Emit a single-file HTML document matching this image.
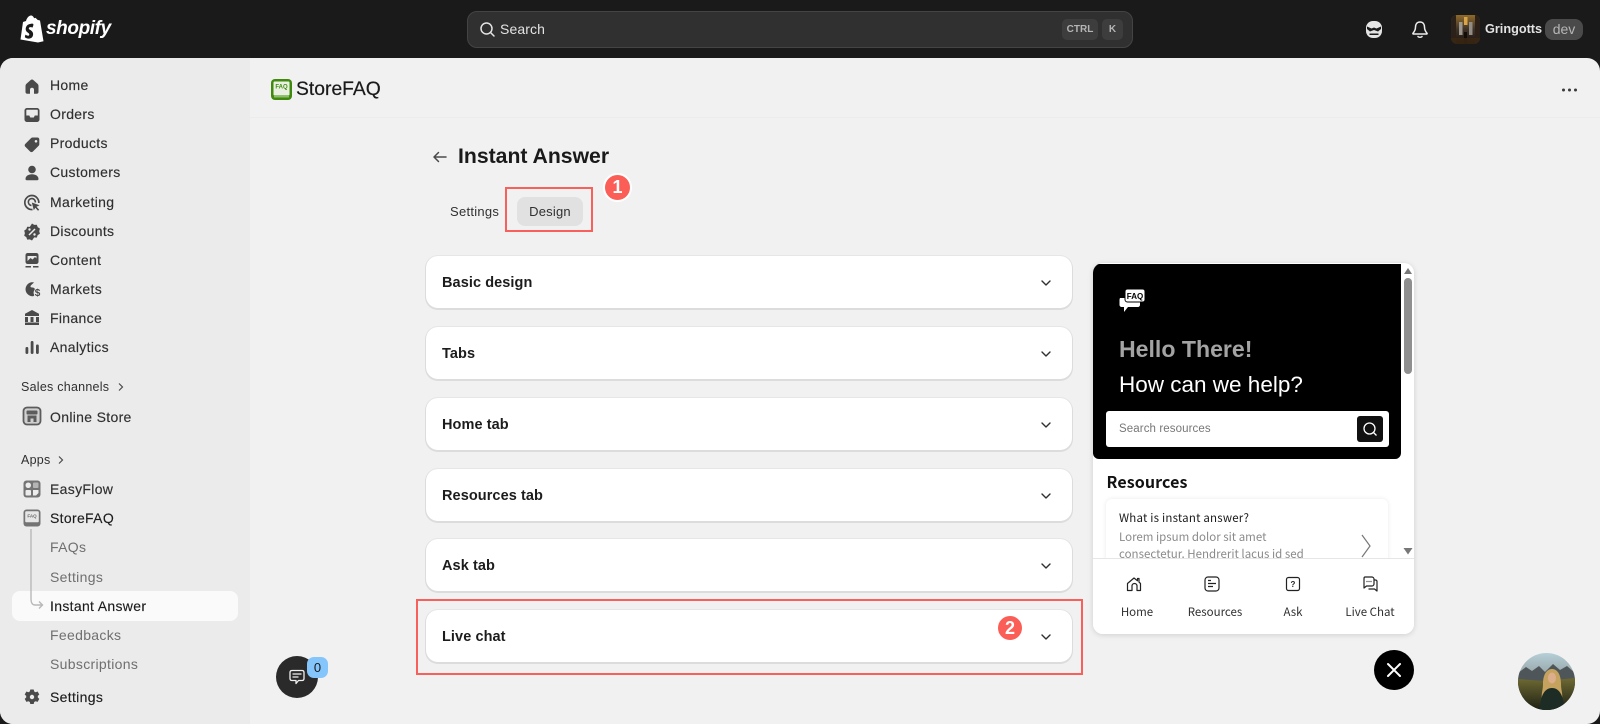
<!DOCTYPE html>
<html><head><meta charset="utf-8"><style>
*{box-sizing:border-box;margin:0;padding:0}
html,body{width:1600px;height:724px;overflow:hidden;background:#1a1a1a;font-family:"Liberation Sans",sans-serif}
.a{position:absolute}
.t{position:absolute;white-space:nowrap;line-height:20px;height:20px}
.n{left:50px;font-size:14px;color:#303030;letter-spacing:.32px;-webkit-text-stroke:.15px #303030}
.s{left:50px;font-size:14px;color:#6f6f6f;letter-spacing:.32px}
.card{position:absolute;left:426px;width:646px;height:52px;background:#fff;border-radius:12px;box-shadow:0 1px 0 1px #dcdcdc,0 0 0 1px #e6e6e6}
.card b{position:absolute;left:16px;top:17px;font-size:14.5px;line-height:20px;color:#1c1c1c;letter-spacing:.08px}
.card svg{position:absolute;left:614px;top:21px}
.ic{position:absolute;left:22px}
.red{position:absolute;border:2px solid #f8605b}
.badge{position:absolute;background:#fb5e57;color:#fff;border-radius:50%;font-weight:bold;text-align:center;border:2px solid #fff}
.lab{position:absolute;top:603px;width:90px;text-align:center;font:11.5px/18px "Noto Sans CJK SC","Liberation Sans",sans-serif;color:#303030}
</style></head><body>
<!-- main -->
<div class="a" style="left:0;top:58px;width:1600px;height:666px;background:#f1f1f1;border-radius:13px;overflow:hidden">
  <div class="a" style="left:0;top:0;width:250px;height:666px;background:#ebebeb"></div>
  <div class="a" style="left:250px;top:59px;width:1350px;height:1px;background:#ececec"></div>
</div>

<!-- top bar -->
<svg class="a" style="left:20px;top:15px" width="24" height="28" viewBox="0 0 24 28"><path d="M20 5.500l-2.400-.6-1.900-1.900c-.2-.2-.5-.1-.6-.1l-1 .3C13.500 1.800 12.600.5 11 .5 8.800.5 6.800 3 6 6L3 7 .5 24.500 18 27.500l5.500-1.300z" fill="#fff"/><path d="M13.500 9.800l-.9 2.700s-1-.5-2.100-.4c-1.700.1-1.700 1.100-1.700 1.400.1 1.500 4.100 1.800 4.300 5.300.2 2.800-1.500 4.700-3.900 4.800-2.800.2-4.400-1.500-4.400-1.500l.6-2.500s1.600 1.200 2.800 1.100c.8 0 1.100-.7 1.100-1.200-.1-2-3.400-1.900-3.600-5.100-.2-2.700 1.600-5.500 5.500-5.700 1.300-.1 1.900.2 1.900.2z" fill="#1a1a1a"/></svg>
<div class="t" style="left:46px;top:19px;font-size:19px;font-weight:bold;font-style:italic;color:#fff;letter-spacing:-.4px">shopify</div>

<div class="a" style="left:467px;top:11px;width:666px;height:37px;background:#303030;border:1px solid #444;border-radius:10px"></div>
<svg class="a" style="left:479px;top:21px" width="17" height="17" viewBox="0 0 17 17" fill="none" stroke="#e3e3e3" stroke-width="1.500"><circle cx="7.500" cy="7.500" r="5.500"/><path d="M11.500 11.500l3.500 3.500" stroke-linecap="round"/></svg>
<div class="t" style="left:500px;top:19px;font-size:14px;color:#e3e3e3;letter-spacing:.1px">Search</div>
<div class="a" style="left:1062px;top:19px;width:36px;height:21px;background:#3d3d3d;border-radius:5px;color:#b5b5b5;font:bold 10px/21px 'Liberation Sans',sans-serif;text-align:center">CTRL</div>
<div class="a" style="left:1102px;top:19px;width:21px;height:21px;background:#3d3d3d;border-radius:5px;color:#b5b5b5;font:bold 10px/21px 'Liberation Sans',sans-serif;text-align:center">K</div>

<svg class="a" style="left:1365px;top:20px" width="18" height="19" viewBox="0 0 18 19"><rect x="1" y="1" width="16" height="17" rx="7" fill="#e4e4e4"/><path d="M2 6.500l4.500 2 2.500-1 2.500 1 4.500-2V9l-3 2.500-4-1.500-4 1.500L2 9zM4.500 13.500h9V15h-9z" fill="#1a1a1a"/></svg>
<svg class="a" style="left:1411px;top:20px" width="18" height="20" viewBox="0 0 18 20" fill="none" stroke="#ececec" stroke-width="1.500"><path d="M9 2c-3.200 0-4.500 2.500-4.500 5 0 3-1 4.500-2.500 6.200-.3.4-.1.8.4.8h13.200c.5 0 .7-.4.4-.8C14.500 11.500 13.500 10 13.500 7c0-2.500-1.300-5-4.500-5z"/><path d="M7 16.500c.4 1 3.600 1 4 0" stroke-linecap="round"/></svg>
<svg class="a" style="left:1451px;top:15px" width="29" height="29" viewBox="0 0 29 29"><defs><clipPath id="av"><rect width="29" height="29" rx="6"/></clipPath><linearGradient id="ag" x1="0" y1="0" x2="0" y2="1"><stop offset="0" stop-color="#8f6a2b"/><stop offset=".5" stop-color="#3d3228"/><stop offset="1" stop-color="#1c130d"/></linearGradient></defs><g clip-path="url(#av)"><rect width="29" height="29" fill="url(#ag)"/><rect x="0" width="5" height="29" fill="#2b2119"/><rect x="24" width="5" height="29" fill="#2b2119"/><rect x="8" y="7" width="3.500" height="13" fill="#9c978e"/><rect x="18" y="7" width="3.500" height="13" fill="#918d85"/><rect x="13" y="2" width="3.500" height="8" fill="#d8a548"/><rect x="13" y="17" width="3" height="12" fill="#120c08"/><rect y="23" width="29" height="6" fill="#3c2814" opacity=".8"/></g></svg>
<div class="t" style="left:1485px;top:19px;font-size:12.7px;font-weight:bold;color:#e3e3e3">Gringotts</div>
<div class="a" style="left:1545px;top:19px;width:38px;height:21px;background:#4a4a4a;border-radius:8px;color:#b5b5b5;font:14px/21px 'Liberation Sans',sans-serif;text-align:center">dev</div>

<!-- sidebar icons -->
<svg class="ic" style="top:77px" width="20" height="18" viewBox="0 0 20 18"><path d="M10 2.500c-.5 0-.9.200-1.300.5L4.500 6.800C4 7.300 3.500 8 3.500 9v6c0 1 .7 1.700 1.700 1.700h2.800v-4.200c0-1 .9-1.800 2-1.800s2 .8 2 1.800v4.200h2.800c1 0 1.700-.7 1.700-1.700V9c0-1-.5-1.700-1-2.200L11.300 3c-.4-.3-.8-.5-1.300-.5z" fill="#4a4a4a"/></svg>
<svg class="ic" style="top:106px" width="20" height="18" viewBox="0 0 20 18"><path d="M5 2h10c1.300 0 2.500 1.100 2.500 2.500v9c0 1.400-1.200 2.500-2.500 2.500H5c-1.300 0-2.500-1.100-2.500-2.500v-9C2.500 3.100 3.700 2 5 2zm-.7 7.500h3l1 2h3.500l1-2h3V4.500c0-.5-.3-.8-.8-.8H5.100c-.5 0-.8.3-.8.8z" fill="#4a4a4a"/></svg>
<svg class="ic" style="top:135px" width="20" height="18" viewBox="0 0 20 18"><path d="M10.500 2.500h5c1 0 1.800.8 1.800 1.800v5c0 .5-.2 1-.5 1.300l-6 6c-.7.700-1.900.7-2.600 0l-5-5c-.7-.7-.7-1.900 0-2.600l6-6c.3-.3.8-.5 1.300-.5zM14 5a1.300 1.300 0 100 2.600A1.300 1.300 0 0014 5z" fill="#4a4a4a"/></svg>
<svg class="ic" style="top:164px" width="20" height="18" viewBox="0 0 20 18" fill="#4a4a4a"><circle cx="10" cy="5.500" r="3.800"/><path d="M3.500 15c0-3 2.900-4.800 6.500-4.800s6.500 1.800 6.500 4.800c0 .8-.5 1.200-1.200 1.200H4.700c-.7 0-1.200-.4-1.200-1.200z"/></svg>
<svg class="ic" style="top:193px" width="20" height="20" viewBox="0 0 20 20" fill="none" stroke="#4a4a4a"><path d="M10.500 16.500A7 7 0 1 1 16.800 10" stroke-width="1.700"/><path d="M9.500 12.500a3.500 3.500 0 1 1 3.800-3" stroke-width="1.600"/><path d="M9.800 9.500l7.700 2.700-3 1.500 2.700 3-1.200 1-2.700-3-1.500 2.500z" fill="#4a4a4a" stroke="none"/></svg>
<svg class="ic" style="top:222px" width="20" height="20" viewBox="0 0 20 20"><path d="M10 1.500l2.200 1.400 2.600-.2.900 2.400 2.200 1.500-.7 2.500.7 2.600-2.200 1.400-.9 2.500-2.600-.2L10 18.500l-2.200-1.100-2.600.2-.9-2.500-2.100-1.400.7-2.600-.7-2.500 2.100-1.500.9-2.400 2.600.2z" fill="#4a4a4a"/><path d="M7 13l6-6" stroke="#ebebeb" stroke-width="1.500"/><circle cx="7.500" cy="7.500" r="1.200" fill="#ebebeb"/><circle cx="12.500" cy="12.500" r="1.200" fill="#ebebeb"/></svg>
<svg class="ic" style="top:250px" width="20" height="20" viewBox="0 0 20 20"><rect x="3.500" y="3" width="13" height="11" rx="2.200" fill="#4a4a4a"/><path d="M5.500 11l3-3 2 1.500L13 7l1.500 1.500V6H5.500z" fill="#ebebeb"/><path d="M3.500 16h5.500v1.500H3.500zM11 16h5.500v1.500H11z" fill="#4a4a4a"/></svg>
<svg class="ic" style="top:279px" width="20" height="20" viewBox="0 0 20 20"><path d="M12.500 3.500A7 7 0 1 0 11 17.200c1-.1 1.500-.7 1-1.700-.7-1.500-.5-3 .5-4.500s-.7-2.500-2.500-2.500-2-1.500-.7-2.500l2.700-2.500z" fill="#4a4a4a"/><text x="12.700" y="17" font-family="Liberation Sans,sans-serif" font-size="10" font-weight="bold" fill="#4a4a4a">$</text></svg>
<svg class="ic" style="top:308px" width="20" height="20" viewBox="0 0 20 20" fill="#4a4a4a"><path d="M10 2l7 3.800V8H3V5.800z"/><path d="M3 9h3v5H3zM8.500 9h3v5h-3zM14 9h3v5h-3zM3 14.500h14V17H3z"/></svg>
<svg class="ic" style="top:337px" width="20" height="20" viewBox="0 0 20 20" fill="#4a4a4a"><rect x="3.500" y="10" width="2.800" height="7" rx="1.200"/><rect x="8.700" y="4" width="2.800" height="13" rx="1.200"/><rect x="14" y="7.500" width="2.800" height="9.500" rx="1.200"/></svg>
<svg class="ic" style="top:406px" width="20" height="20" viewBox="0 0 20 20"><rect x="1.500" y="1.500" width="17" height="17" rx="3.500" fill="#cfcfcf" stroke="#5c5c5c" stroke-width="1.800"/><rect x="4.500" y="4.500" width="11" height="4" rx="1" fill="#5c5c5c"/><path d="M5.500 9.500h9V16h-3v-3.500h-3V16h-3z" fill="#5c5c5c"/></svg>
<svg class="ic" style="top:479px" width="20" height="20" viewBox="0 0 20 20"><rect x="1.500" y="1.500" width="17" height="17" rx="3" fill="#747474"/><rect x="3.500" y="3.500" width="5.500" height="5.500" rx="2.700" fill="#ececec"/><rect x="11" y="3.500" width="5.500" height="5.500" rx="1" fill="#b5b5b5"/><rect x="3.500" y="11" width="5.500" height="5.500" rx="1" fill="#ececec"/><path d="M11 11h5.500v3l-2.500 2.500H11z" fill="#ececec"/></svg>
<svg class="ic" style="top:508px" width="20" height="20" viewBox="0 0 20 20"><rect x="1.500" y="1.500" width="17" height="17" rx="3" fill="#747474"/><rect x="3.200" y="3.200" width="13.600" height="11" rx="1" fill="#e6e6e6"/><text x="10" y="9.500" text-anchor="middle" font-family="Liberation Sans,sans-serif" font-size="4.500" font-weight="bold" fill="#666">FAQ</text></svg>
<svg class="ic" style="top:687px" width="20" height="20" viewBox="0 0 20 20"><path d="M8.300 2.500h3.400l.5 2 1.400.7 2-.7 1.700 3-1.500 1.400v1.600l1.500 1.400-1.700 3-2-.7-1.400.8-.5 2H8.300l-.5-2-1.400-.8-2 .7-1.700-3 1.500-1.400V8.900L2.700 7.500l1.700-3 2 .7 1.400-.7zM10 7.800a2.200 2.200 0 100 4.400 2.200 2.200 0 000-4.400z" fill="#4a4a4a" fill-rule="evenodd"/></svg>

<!-- sidebar text -->
<div class="t n" style="top:75px">Home</div>
<div class="t n" style="top:104px">Orders</div>
<div class="t n" style="top:133px">Products</div>
<div class="t n" style="top:162px">Customers</div>
<div class="t n" style="top:192px">Marketing</div>
<div class="t n" style="top:221px">Discounts</div>
<div class="t n" style="top:250px">Content</div>
<div class="t n" style="top:279px">Markets</div>
<div class="t n" style="top:308px">Finance</div>
<div class="t n" style="top:337px">Analytics</div>
<div class="t" style="left:21px;top:377px;font-size:12.5px;color:#303030;letter-spacing:.25px">Sales channels</div>
<svg class="a" style="left:117px;top:382px" width="8" height="10" viewBox="0 0 8 10" fill="none" stroke="#4a4a4a" stroke-width="1.200"><path d="M2 1.500l3.500 3.500L2 8.500"/></svg>
<div class="t n" style="top:407px">Online Store</div>
<div class="t" style="left:21px;top:450px;font-size:12.5px;color:#303030;letter-spacing:.25px">Apps</div>
<svg class="a" style="left:57px;top:455px" width="8" height="10" viewBox="0 0 8 10" fill="none" stroke="#4a4a4a" stroke-width="1.200"><path d="M2 1.500l3.500 3.500L2 8.500"/></svg>
<div class="t n" style="top:479px">EasyFlow</div>
<div class="t n" style="top:508px;color:#1a1a1a">StoreFAQ</div>
<div class="a" style="left:12px;top:591px;width:226px;height:30px;background:#fafafa;border-radius:8px"></div>
<svg class="a" style="left:28px;top:528px" width="16" height="84" viewBox="0 0 16 84" fill="none" stroke="#b8b8b8" stroke-width="1.400"><path d="M3 1v70c0 3 1 6 4 6h7M11 73.500l3.500 3.500-3.500 3.500"/></svg>
<div class="t s" style="top:537px">FAQs</div>
<div class="t s" style="top:567px">Settings</div>
<div class="t n" style="top:596px;color:#1a1a1a">Instant Answer</div>
<div class="t s" style="top:625px">Feedbacks</div>
<div class="t s" style="top:654px">Subscriptions</div>
<div class="t n" style="top:687px;color:#1a1a1a">Settings</div>

<!-- app header -->
<svg class="a" style="left:271px;top:79px" width="21" height="21" viewBox="0 0 21 21"><rect width="21" height="21" rx="4" fill="#3f8a0e"/><rect x="2.500" y="2.500" width="16" height="14" rx="1" fill="#e9f0e2"/><path d="M3 17h15v1.500H3z" fill="#8fbe6a"/><text x="10.500" y="9.500" text-anchor="middle" font-family="Liberation Sans,sans-serif" font-size="6" font-weight="bold" fill="#3f8a0e">FAQ</text></svg>
<div class="t" style="left:296px;top:79px;font-size:19.3px;line-height:22px;height:22px;color:#1a1a1a;-webkit-text-stroke:.2px #1a1a1a;letter-spacing:.02px">StoreFAQ</div>
<svg class="a" style="left:1561px;top:87px" width="17" height="6" viewBox="0 0 17 6" fill="#3a3a3a"><circle cx="2.500" cy="3" r="1.500"/><circle cx="8.500" cy="3" r="1.500"/><circle cx="14.500" cy="3" r="1.500"/></svg>

<!-- page head -->
<svg class="a" style="left:431px;top:149px" width="17" height="16" viewBox="0 0 17 16" fill="none" stroke="#4a4a4a" stroke-width="1.500" stroke-linecap="round" stroke-linejoin="round"><path d="M15 8H3M7.500 3.500L3 8l4.500 4.500"/></svg>
<div class="t" style="left:458px;top:145px;font-size:21.2px;line-height:24px;height:24px;font-weight:bold;color:#1a1a1a">Instant Answer</div>
<div class="t" style="left:450px;top:202px;font-size:13px;color:#303030;letter-spacing:.28px">Settings</div>
<div class="a" style="left:517px;top:197px;width:66px;height:29px;background:#e1e1e1;border-radius:8px;text-align:center;font-size:13px;line-height:29px;color:#303030;letter-spacing:.2px">Design</div>
<div class="red" style="left:505px;top:187px;width:88px;height:45px"></div>
<div class="badge" style="left:603px;top:173px;width:29px;height:29px;font-size:18px;line-height:25px">1</div>

<!-- cards -->
<div class="card" style="top:256px"><b>Basic design</b><svg width="12" height="12" viewBox="0 0 12 12" fill="none" stroke="#303030" stroke-width="1.400" stroke-linecap="round" stroke-linejoin="round"><path d="M2 4l4 4 4-4"/></svg></div>
<div class="card" style="top:327px"><b>Tabs</b><svg width="12" height="12" viewBox="0 0 12 12" fill="none" stroke="#303030" stroke-width="1.400" stroke-linecap="round" stroke-linejoin="round"><path d="M2 4l4 4 4-4"/></svg></div>
<div class="card" style="top:398px"><b>Home tab</b><svg width="12" height="12" viewBox="0 0 12 12" fill="none" stroke="#303030" stroke-width="1.400" stroke-linecap="round" stroke-linejoin="round"><path d="M2 4l4 4 4-4"/></svg></div>
<div class="card" style="top:469px"><b>Resources tab</b><svg width="12" height="12" viewBox="0 0 12 12" fill="none" stroke="#303030" stroke-width="1.400" stroke-linecap="round" stroke-linejoin="round"><path d="M2 4l4 4 4-4"/></svg></div>
<div class="card" style="top:539px"><b>Ask tab</b><svg width="12" height="12" viewBox="0 0 12 12" fill="none" stroke="#303030" stroke-width="1.400" stroke-linecap="round" stroke-linejoin="round"><path d="M2 4l4 4 4-4"/></svg></div>
<div class="card" style="top:610px"><b>Live chat</b><svg width="12" height="12" viewBox="0 0 12 12" fill="none" stroke="#303030" stroke-width="1.400" stroke-linecap="round" stroke-linejoin="round"><path d="M2 4l4 4 4-4"/></svg></div>
<div class="red" style="left:416px;top:599px;width:667px;height:76px"></div>
<div class="badge" style="left:996px;top:614px;width:28px;height:28px;font-size:18px;line-height:24px">2</div>

<!-- preview panel -->
<div class="a" style="left:1093px;top:263px;width:321px;height:371px;background:#fff;border-radius:10px;box-shadow:0 1px 6px rgba(0,0,0,.14);overflow:hidden">
  <div class="a" style="left:0;top:1px;width:308px;height:195px;background:#000;border-radius:6px 0 6px 6px"></div>
  <div class="a" style="left:13.500px;top:208px;font:bold 16px/20px 'Noto Sans CJK SC','Liberation Sans',sans-serif;color:#111;letter-spacing:.1px">Resources</div>
  <div class="a" style="left:13px;top:236px;width:282px;height:90px;background:#fff;border-radius:6px;box-shadow:0 0 5px rgba(0,0,0,.09)">
    <div class="a" style="left:13px;top:10px;white-space:nowrap;font:11.5px/18px 'Noto Sans CJK SC','Liberation Sans',sans-serif;color:#1a1a1a;letter-spacing:.2px">What is instant answer?</div>
    <div class="a" style="left:13px;top:30px;white-space:nowrap;font:11.5px/17px 'Noto Sans CJK SC','Liberation Sans',sans-serif;color:#8a8a8a">Lorem ipsum dolor sit amet<br>consectetur. Hendrerit lacus id sed</div>
  </div>
  <svg class="a" style="left:267px;top:269px" width="12" height="28" viewBox="0 0 12 28" fill="none" stroke="#777" stroke-width="1.200"><path d="M2 3l8 11-8 11"/></svg>
  <div class="a" style="left:0;top:295px;width:321px;height:76px;background:#fff;border-top:1px solid #e6e6e6"></div>
  <div class="a" style="left:311px;top:15px;width:8px;height:96px;background:#8f8f8f;border-radius:4px"></div>
  <svg class="a" style="left:310px;top:4px" width="10" height="8" viewBox="0 0 10 8" fill="#777"><path d="M5 1l4 6H1z"/></svg>
  <svg class="a" style="left:310px;top:284px" width="10" height="8" viewBox="0 0 10 8" fill="#777"><path d="M5 7.500L.500 1h9z"/></svg>
</div>
<svg class="a" style="left:1119px;top:288px" width="27" height="27" viewBox="0 0 27 27"><path d="M1 10h18c1 0 2 .8 2 2v5c0 1-1 2-2 2H9l-4 5v-5H2.500C1.500 19 .5 18 .5 17v-5c0-1 .5-2 .5-2z" fill="#fff"/><rect x="6" y="1" width="20" height="13" rx="2.500" fill="#fff" stroke="#000"/><text x="16" y="11" text-anchor="middle" font-family="Liberation Sans,sans-serif" font-size="8" font-weight="bold" fill="#000">FAQ</text></svg>
<div class="t" style="left:1119px;top:336px;font-size:23.100px;line-height:26px;height:26px;font-weight:bold;color:#a3a3a3">Hello There!</div>
<div class="t" style="left:1119px;top:371px;font-size:22.500px;line-height:28px;height:28px;color:#fff">How can we help?</div>
<div class="a" style="left:1106px;top:411px;width:283px;height:36px;background:#fff;border-radius:3px"></div>
<div class="t" style="left:1119px;top:419px;font-size:11.5px;color:#777;letter-spacing:.1px">Search resources</div>
<div class="a" style="left:1357px;top:416px;width:26px;height:26px;background:#111;border-radius:3px"></div>
<svg class="a" style="left:1362px;top:421px" width="16" height="16" viewBox="0 0 16 16" fill="none" stroke="#fff" stroke-width="1.300"><circle cx="7.500" cy="7.500" r="5.500"/><path d="M11.500 11.500l3 3"/></svg>

<!-- tab icons -->
<svg class="a" style="left:1125px;top:575px" width="18" height="18" viewBox="0 0 18 18" fill="none" stroke="#222" stroke-width="1.200" stroke-linejoin="round"><path d="M2.500 15.500V8.500L9 3l3.500 2.800V3.500h1.500v3.600l1.500 1.400v7h-3.500v-4.500a2.500 2.500 0 00-5 0v4.500z"/></svg>
<svg class="a" style="left:1203px;top:575px" width="18" height="18" viewBox="0 0 18 18" fill="none" stroke="#222" stroke-width="1.200"><rect x="2" y="2" width="14" height="14" rx="3"/><path d="M5 5.500h3M5 8.500h8M5 11.500h5" stroke-width="1.300"/></svg>
<svg class="a" style="left:1284px;top:575px" width="18" height="18" viewBox="0 0 18 18"><rect x="2.500" y="2.500" width="13" height="13" rx="2" fill="none" stroke="#222" stroke-width="1.200"/><text x="9" y="12" text-anchor="middle" font-family="Liberation Sans,sans-serif" font-size="8" font-weight="bold" fill="#222">?</text></svg>
<svg class="a" style="left:1361px;top:575px" width="18" height="18" viewBox="0 0 18 18" fill="none" stroke="#222" stroke-width="1.200" stroke-linejoin="round"><path d="M4 2h7c1 0 2 1 2 2v5c0 1-1 2-2 2H5.500L3 13V4c0-1 0-2 1-2z"/><path d="M13 5h1.500c.8 0 1.500.7 1.500 1.500V16l-2.500-2H7.500"/><path d="M5.500 6.500h5" stroke-dasharray="1 1"/></svg>
<div class="lab" style="left:1092px">Home</div>
<div class="lab" style="left:1170px">Resources</div>
<div class="lab" style="left:1248px">Ask</div>
<div class="lab" style="left:1325px">Live Chat</div>

<!-- floats -->
<div class="a" style="left:1374px;top:650px;width:40px;height:40px;background:#000;border-radius:50%"></div>
<svg class="a" style="left:1385px;top:661px" width="18" height="18" viewBox="0 0 18 18" stroke="#fff" stroke-width="2" stroke-linecap="round"><path d="M3 3l12 12M15 3L3 15"/></svg>
<svg class="a" style="left:1518px;top:653px" width="57" height="57" viewBox="0 0 57 57"><defs><clipPath id="pc"><circle cx="28.500" cy="28.500" r="28.500"/></clipPath><linearGradient id="sky" x1="0" y1="0" x2="0" y2="1"><stop offset="0" stop-color="#b6cfd8"/><stop offset=".35" stop-color="#9aa9ab"/></linearGradient><linearGradient id="hill" x1="0" y1="0" x2="0" y2="1"><stop offset="0" stop-color="#6f6a33"/><stop offset="1" stop-color="#1d2014"/></linearGradient></defs><g clip-path="url(#pc)"><rect width="57" height="57" fill="url(#sky)"/><path d="M0 20l8-6 6 4 7-5 6 6 8-8 7 6 7-4 8 7v37H0z" fill="#4f565a"/><path d="M0 26l26 2 31-3v32H0z" fill="url(#hill)"/><path d="M25 31c0-10 4-15 9-15s9 5 9 15c0 6 2 10 1 15H24c-1-5 1-9 1-15z" fill="#c6a25f"/><ellipse cx="34" cy="25" rx="4" ry="5.500" fill="#dcae8c"/><path d="M22 57c0-13 4-22 12-22s12 9 12 22z" fill="#1d2c25"/></g></svg>
<div class="a" style="left:276px;top:656px;width:42px;height:42px;background:#2a2a2a;border-radius:50%"></div>
<svg class="a" style="left:288px;top:668px" width="18" height="18" viewBox="0 0 18 18" fill="none" stroke="#f1f1f1" stroke-width="1.300" stroke-linejoin="round"><path d="M4 2.500h10c1.200 0 2 .8 2 2v6c0 1.200-.8 2-2 2h-3.500L8 15.500v-3H4c-1.200 0-2-.8-2-2v-6c0-1.200.8-2 2-2z"/><path d="M5 6h8M5 9h5" stroke-linecap="round"/></svg>
<div class="a" style="left:307px;top:657px;width:21px;height:21px;background:#84c6fb;border-radius:7px;text-align:center;font-size:13px;line-height:21px;color:#1a1a1a">0</div>
</body></html>
